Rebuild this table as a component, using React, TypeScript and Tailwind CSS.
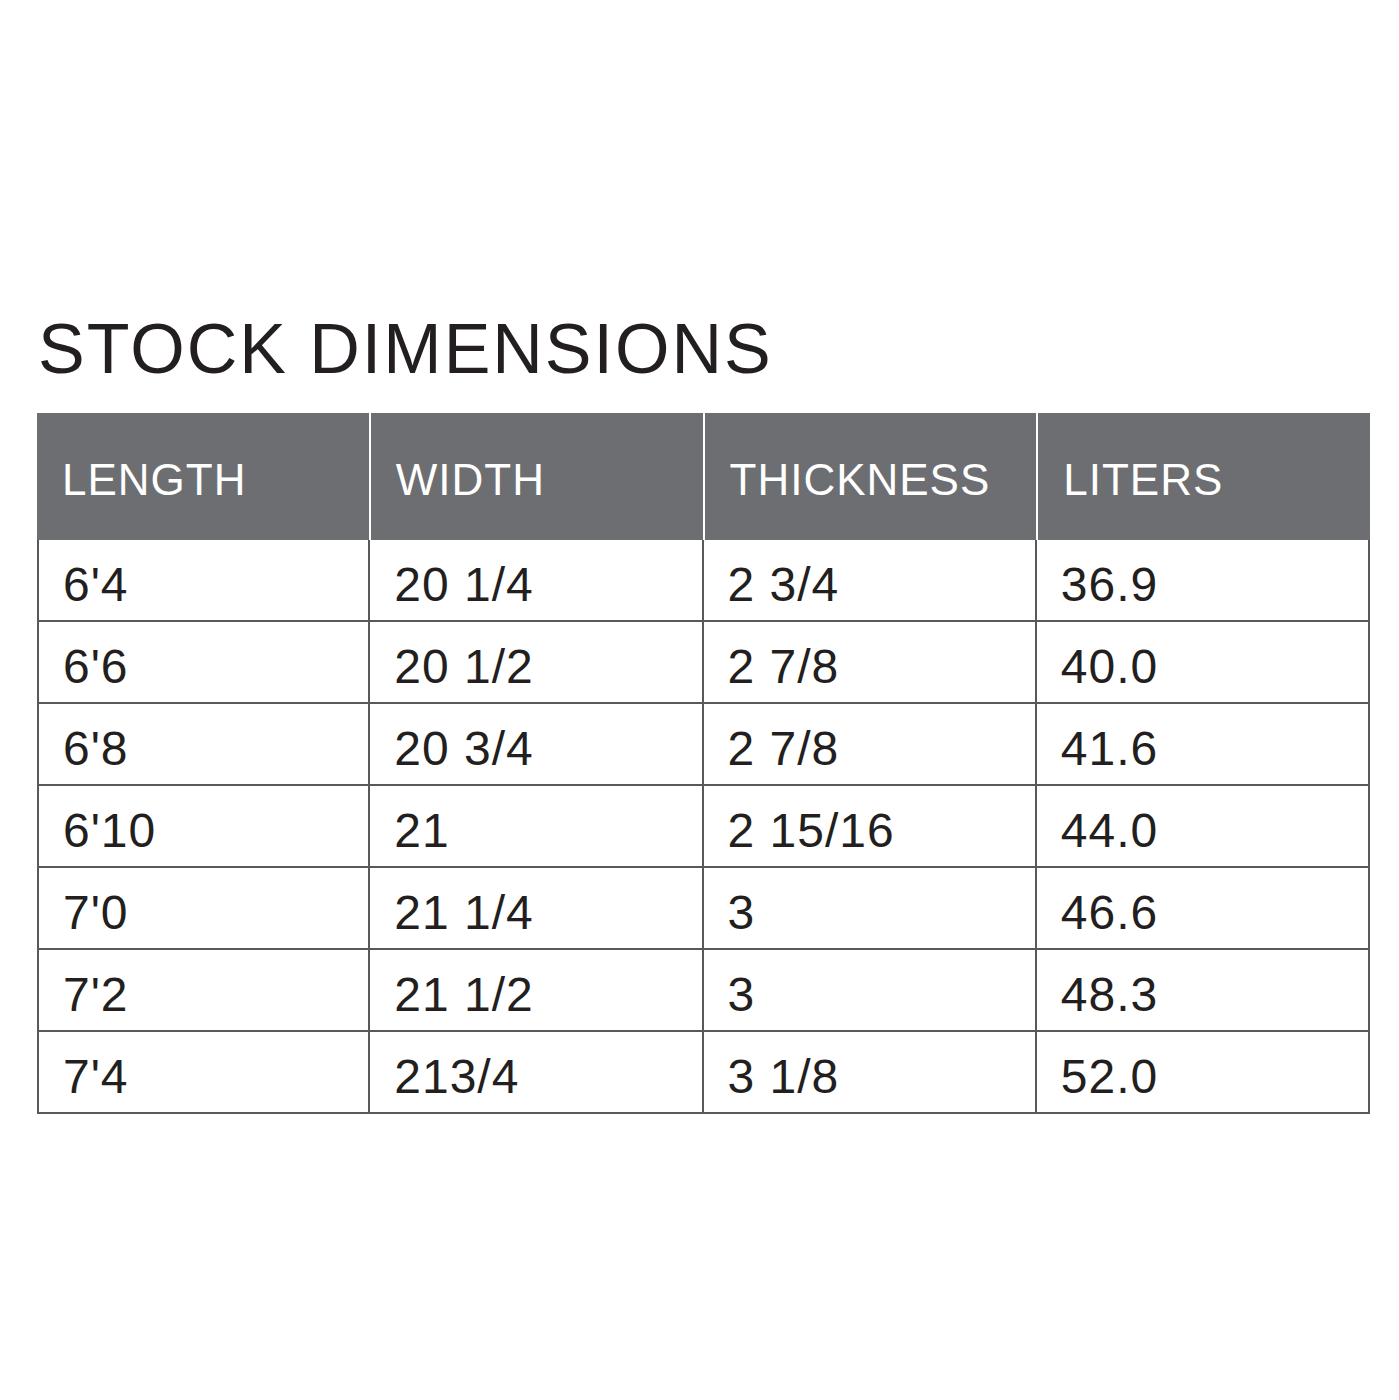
const headers = ['LENGTH', 'WIDTH', 'THICKNESS', 'LITERS'];

const rows = [
  ["6'4", '20 1/4', '2 3/4', '36.9'],
  ["6'6", '20 1/2', '2 7/8', '40.0'],
  ["6'8", '20 3/4', '2 7/8', '41.6'],
  ["6'10", '21', '2 15/16', '44.0'],
  ["7'0", '21 1/4', '3', '46.6'],
  ["7'2", '21 1/2', '3', '48.3'],
  ["7'4", '213/4', '3 1/8', '52.0'],
];

export default function App() {
  return (
    <div
      className="min-h-[1400px] w-[1399px] bg-white pl-[37px] pt-[314px] text-[#231f20]"
      style={{ fontFamily: '"Liberation Sans", Arial, sans-serif' }}
    >
      <h1 className="ml-px text-[70px] leading-none tracking-[2px]">STOCK DIMENSIONS</h1>

      <div className="mt-[29px] w-[1333px]">
        {/* header */}
        <div className="grid grid-cols-4 gap-[2px] bg-white">
          {headers.map((h) => (
            <div
              key={h}
              className="flex h-[127px] items-center bg-[#6d6e71] pl-[25px] pt-[6px] text-[44px] leading-none tracking-[1px] text-white"
            >
              {h}
            </div>
          ))}
        </div>

        {/* body */}
        <div className="grid grid-cols-4">
          {rows.map((r, ri) =>
            r.map((c, ci) => (
              <div
                key={`${ri}-${ci}`}
                className={`flex h-[82px] items-center whitespace-pre border-b-2 border-r-2 border-[#58595b] pl-[24px] pt-[9px] text-[48px] leading-none tracking-[1px] ${
                  ci === 0 ? 'border-l-2' : ''
                }`}
              >
                {c}
              </div>
            ))
          )}
        </div>
      </div>
    </div>
  );
}
